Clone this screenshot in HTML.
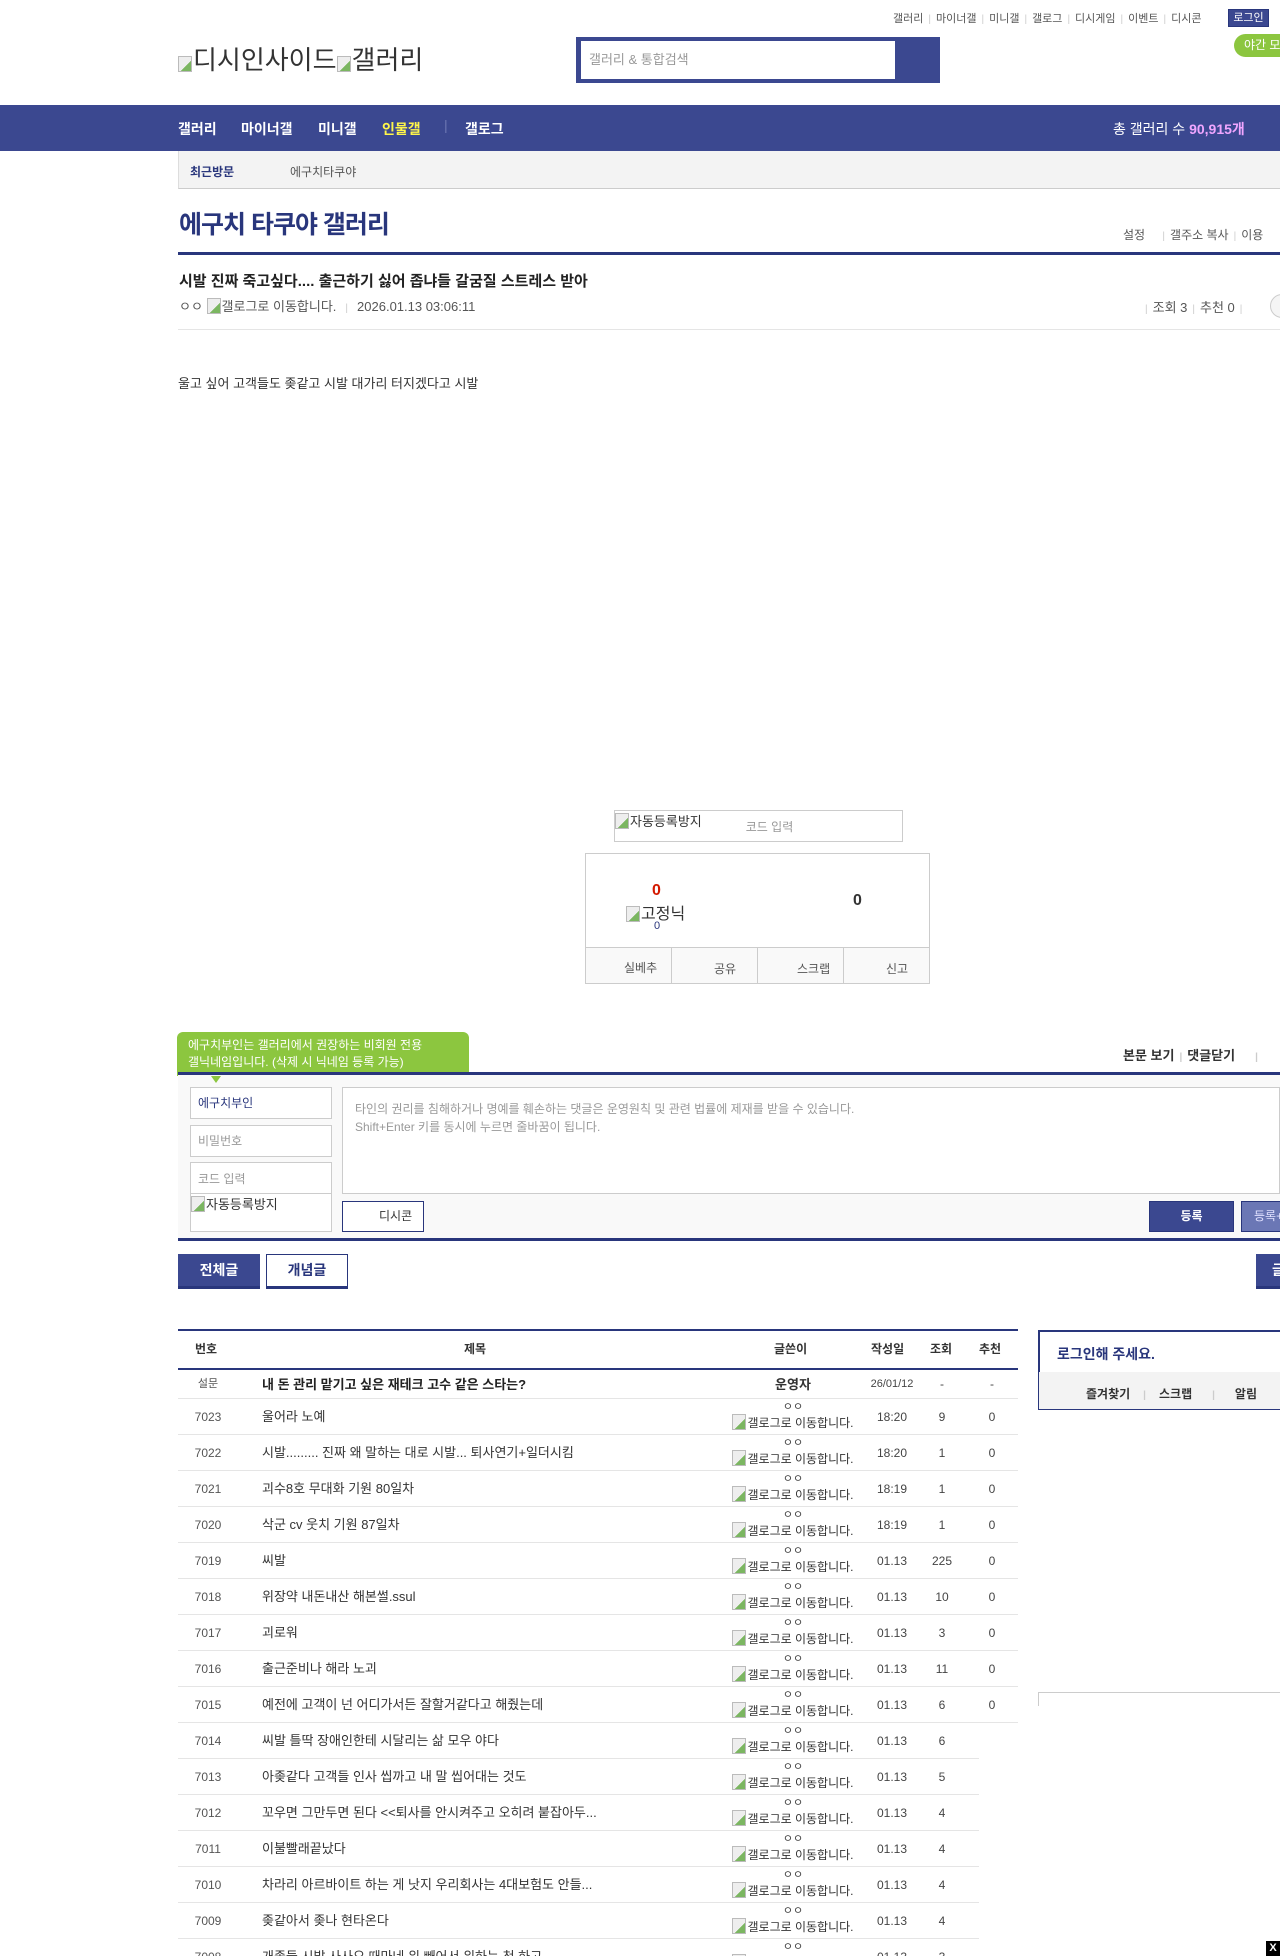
<!DOCTYPE html>
<html><head><meta charset="utf-8">
<style>
*{margin:0;padding:0;box-sizing:border-box}
html,body{width:1280px;height:1956px;overflow:hidden;background:#fff}
body{position:relative;font-family:"Liberation Sans","Noto Sans CJK KR",sans-serif;font-size:13px;color:#333}
.a{position:absolute;white-space:nowrap}
.bi{display:inline-block;width:14px;height:16px;border:1px solid #bbb;background:linear-gradient(135deg,#eee 60%,#7bb661 60%);vertical-align:-3px;margin-right:1px}
.top a{color:#555;font-size:11px;text-decoration:none}
.sep{color:#ccc;margin:0 5px;font-size:10px}
.nav span{position:absolute;top:14px;color:#fff;font-weight:bold;font-size:14px}
.row{position:absolute;left:178px;height:36px;border-bottom:1px solid #e5e5e5;font-size:12px}
.row div{position:absolute;top:0;height:36px;line-height:36px}
.n{left:0;width:60px;text-align:center;color:#555}
.t{left:84px;font-size:13px;color:#333}
.w{left:535px;width:160px;text-align:center;line-height:13px!important;font-size:12px}
.w i{display:block;font-style:normal;font-size:11px;margin-top:2px;color:#444}
.d{left:686px;width:56px;text-align:center;color:#444}
.v{left:738px;width:52px;text-align:center;color:#444}
.r{left:788px;width:52px;text-align:center;color:#444}
</style></head><body>

<div class="a top" style="left:893px;top:10px">
<a>갤러리</a><span class="sep">|</span><a>마이너갤</a><span class="sep">|</span><a>미니갤</a><span class="sep">|</span><a>갤로그</a><span class="sep">|</span><a>디시게임</a><span class="sep">|</span><a>이벤트</a><span class="sep">|</span><a>디시콘</a>
</div>
<div class="a" style="left:1228px;top:9px;width:41px;height:18px;background:#3b4890;border:1px solid #29367c;color:#fff;font-size:11px;text-align:center;line-height:16px">로그인</div>
<div class="a" style="left:1234px;top:34px;width:60px;height:23px;background:#8cc63f;border-radius:12px;color:#fff;font-size:12px;line-height:23px;padding-left:10px">야간 모드</div>

<div class="a" style="left:178px;top:40px;font-size:26px;color:#333"><span class="bi"></span>디시인사이드<span class="bi"></span>갤러리</div>

<div class="a" style="left:576px;top:37px;width:364px;height:46px;background:#3b4890"></div>
<div class="a" style="left:581px;top:41px;width:314px;height:38px;background:#fff;color:#999;font-size:13px;line-height:38px;padding-left:8px">갤러리 &amp; 통합검색</div>

<div class="a nav" style="left:0;top:105px;width:1280px;height:46px;background:#3b4890">
<span style="left:178px">갤러리</span>
<span style="left:241px">마이너갤</span>
<span style="left:318px">미니갤</span>
<span style="left:382px;color:#fff64a">인물갤</span>
<span style="left:444px;top:12px;color:#6c77b3;font-weight:normal">|</span>
<span style="left:465px">갤로그</span>
<span style="left:1113px;font-weight:normal">총 갤러리 수 <b style="color:#f0a6ff">90,915개</b></span>
</div>

<div class="a" style="left:178px;top:151px;width:1102px;height:38px;background:#f3f3f3;border-left:1px solid #ddd;border-bottom:1px solid #ccc"></div>
<div class="a" style="left:190px;top:163px;font-size:12px;font-weight:bold;color:#29367c">최근방문</div>
<div class="a" style="left:290px;top:163px;font-size:12px;color:#555">에구치타쿠야</div>

<div class="a" style="left:179px;top:205px;font-size:25px;font-weight:bold;color:#29367c;letter-spacing:-1px">에구치 타쿠야 갤러리</div>
<div class="a" style="left:1123px;top:226px;font-size:12px;color:#555">설정 <span class="sep" style="margin-left:14px">|</span>갤주소 복사<span class="sep">|</span>이용</div>
<div class="a" style="left:178px;top:252px;width:1102px;height:3px;background:#29367c"></div>

<div class="a" style="left:179px;top:270px;font-size:15px;font-weight:bold;color:#222">시발 진짜 죽고싶다.... 출근하기 싫어 좁냐들 갈굼질 스트레스 받아</div>
<div class="a" style="left:179px;top:296px;font-size:13px;color:#555">ㅇㅇ <span class="bi"></span>갤로그로 이동합니다.<span class="sep" style="margin:0 9px">|</span>2026.01.13 03:06:11</div>
<div class="a" style="left:1140px;top:297px;font-size:13px;color:#555"><span class="sep">|</span>조회 3<span class="sep">|</span>추천 0<span class="sep">|</span></div>
<div class="a" style="left:1270px;top:294px;width:24px;height:24px;border:1px solid #ccc;border-radius:12px;background:#f5f5f5"></div>
<div class="a" style="left:178px;top:329px;width:1102px;height:1px;background:#e5e5e5"></div>

<div class="a" style="left:178px;top:373px;font-size:13px;color:#333">울고 싶어 고객들도 좆같고 시발 대가리 터지겠다고 시발</div>

<div class="a" style="left:614px;top:810px;width:289px;height:32px;border:1px solid #ccc;font-size:13px"><span class="bi"></span>자동등록방지<span style="color:#999;font-size:12px;margin-left:44px;position:relative;top:5px">코드 입력</span></div>

<div class="a" style="left:585px;top:853px;width:345px;height:131px;border:1px solid #ccc"></div>
<div class="a" style="left:652px;top:882px;color:#d31900;font-weight:bold;font-size:16px">0</div>
<div class="a" style="left:626px;top:900px;font-size:16px;color:#333"><span class="bi"></span>고정닉</div>
<div class="a" style="left:654px;top:920px;color:#29367c;font-size:11px">0</div>
<div class="a" style="left:853px;top:892px;color:#333;font-weight:bold;font-size:16px">0</div>
<div class="a" style="left:585px;top:947px;width:345px;height:37px;background:#f9f9f9;border:1px solid #ccc"></div>
<div class="a" style="left:671px;top:947px;width:1px;height:37px;background:#ccc"></div>
<div class="a" style="left:757px;top:947px;width:1px;height:37px;background:#ccc"></div>
<div class="a" style="left:843px;top:947px;width:1px;height:37px;background:#ccc"></div>
<div class="a" style="left:624px;top:959px;font-size:12px;color:#555">실베추</div>
<div class="a" style="left:714px;top:960px;font-size:12px;color:#555">공유</div>
<div class="a" style="left:797px;top:960px;font-size:12px;color:#555">스크랩</div>
<div class="a" style="left:886px;top:960px;font-size:12px;color:#555">신고</div>

<div class="a" style="left:177px;top:1032px;width:292px;height:44px;background:#8cc63f;border-radius:6px 6px 0 0;color:#fff;font-size:12px;line-height:17px;padding:5px 11px">에구치부인는 갤러리에서 권장하는 비회원 전용<br>갤닉네임입니다. (삭제 시 닉네임 등록 가능)</div>
<div class="a" style="left:211px;top:1076px;width:0;height:0;border-left:5px solid transparent;border-right:5px solid transparent;border-top:7px solid #8cc63f;z-index:2"></div>
<div class="a" style="left:1123px;top:1045px;font-size:13px;font-weight:bold;color:#333">본문 보기<span class="sep">|</span>댓글닫기<span class="sep" style="margin-left:20px">|</span></div>
<div class="a" style="left:178px;top:1072px;width:1102px;height:3px;background:#29367c"></div>
<div class="a" style="left:178px;top:1075px;width:1102px;height:165px;background:#f9f9f9"></div>
<div class="a" style="left:190px;top:1087px;width:142px;height:32px;border:1px solid #ccc;background:#fff;color:#29367c;font-size:12px;line-height:30px;padding-left:7px">에구치부인</div>
<div class="a" style="left:190px;top:1125px;width:142px;height:32px;border:1px solid #ccc;background:#fff;color:#999;font-size:12px;line-height:30px;padding-left:7px">비밀번호</div>
<div class="a" style="left:190px;top:1162px;width:142px;height:70px;border:1px solid #ccc;background:#fff"></div>
<div class="a" style="left:190px;top:1193px;width:142px;height:1px;background:#ccc"></div>
<div class="a" style="left:198px;top:1170px;color:#999;font-size:12px">코드 입력</div>
<div class="a" style="left:191px;top:1194px;font-size:13px"><span class="bi"></span>자동등록방지</div>
<div class="a" style="left:342px;top:1087px;width:938px;height:107px;border:1px solid #ccc;background:#fff;color:#999;font-size:12px;line-height:18px;padding:12px 12px">타인의 권리를 침해하거나 명예를 훼손하는 댓글은 운영원칙 및 관련 법률에 제재를 받을 수 있습니다.<br>Shift+Enter 키를 동시에 누르면 줄바꿈이 됩니다.</div>
<div class="a" style="left:342px;top:1201px;width:82px;height:31px;border:1px solid #29367c;background:#fff;font-size:12px;line-height:29px;padding-left:36px;color:#333">디시콘</div>
<div class="a" style="left:1149px;top:1201px;width:85px;height:31px;background:#3b4890;border:1px solid #29367c;color:#fff;font-size:12px;font-weight:bold;text-align:center;line-height:29px">등록</div>
<div class="a" style="left:1241px;top:1201px;width:60px;height:31px;background:#6b77b5;border:1px solid #29367c;color:#e0e0ff;font-size:12px;line-height:29px;padding-left:12px">등록+추천</div>
<div class="a" style="left:178px;top:1238px;width:1102px;height:3px;background:#29367c"></div>

<div class="a" style="left:178px;top:1254px;width:82px;height:35px;background:#3b4890;border-bottom:3px solid #29367c;color:#fff;font-weight:bold;font-size:14px;text-align:center;line-height:33px">전체글</div>
<div class="a" style="left:266px;top:1254px;width:82px;height:35px;background:#fff;border:1px solid #29367c;border-bottom:3px solid #29367c;color:#29367c;font-weight:bold;font-size:14px;text-align:center;line-height:31px">개념글</div>
<div class="a" style="left:1256px;top:1254px;width:40px;height:35px;background:#3b4890;border-bottom:3px solid #29367c;color:#fff;font-weight:bold;font-size:14px;line-height:33px;padding-left:16px">글쓰기</div>

<div class="a" style="left:178px;top:1329px;width:840px;height:2px;background:#29367c"></div>
<div class="a" style="left:178px;top:1340px;width:840px;font-size:12px;font-weight:bold;color:#333;height:20px">
<span class="a" style="left:17px">번호</span><span class="a" style="left:286px">제목</span><span class="a" style="left:596px">글쓴이</span><span class="a" style="left:693px">작성일</span><span class="a" style="left:752px">조회</span><span class="a" style="left:801px">추천</span></div>
<div class="a" style="left:178px;top:1368px;width:840px;height:2px;background:#29367c"></div>

<div class="row" style="top:1370px;width:840px;height:29px"><div class="n" style="height:29px;line-height:29px;font-size:11px">설문</div><div class="t" style="height:29px;line-height:29px;font-weight:bold;color:#222">내 돈 관리 맡기고 싶은 재테크 고수 같은 스타는?</div><div class="w" style="height:29px;line-height:29px!important;font-weight:bold;font-size:13px">운영자</div><div class="d" style="height:29px;line-height:29px;font-size:11px">26/01/12</div><div class="v" style="height:29px;line-height:29px">-</div><div class="r" style="height:29px;line-height:29px">-</div></div>

<div class="row" style="top:1399px;width:840px"><div class="n">7023</div><div class="t">울어라 노예</div><div class="w"><i>ㅇㅇ</i><span class="bi"></span>갤로그로 이동합니다.</div><div class="d">18:20</div><div class="v">9</div><div class="r">0</div></div>
<div class="row" style="top:1435px;width:840px"><div class="n">7022</div><div class="t">시발......... 진짜 왜 말하는 대로 시발... 퇴사연기+일더시킴</div><div class="w"><i>ㅇㅇ</i><span class="bi"></span>갤로그로 이동합니다.</div><div class="d">18:20</div><div class="v">1</div><div class="r">0</div></div>
<div class="row" style="top:1471px;width:840px"><div class="n">7021</div><div class="t">괴수8호 무대화 기원 80일차</div><div class="w"><i>ㅇㅇ</i><span class="bi"></span>갤로그로 이동합니다.</div><div class="d">18:19</div><div class="v">1</div><div class="r">0</div></div>
<div class="row" style="top:1507px;width:840px"><div class="n">7020</div><div class="t">삭군 cv 웃치 기원 87일차</div><div class="w"><i>ㅇㅇ</i><span class="bi"></span>갤로그로 이동합니다.</div><div class="d">18:19</div><div class="v">1</div><div class="r">0</div></div>
<div class="row" style="top:1543px;width:840px"><div class="n">7019</div><div class="t">씨발</div><div class="w"><i>ㅇㅇ</i><span class="bi"></span>갤로그로 이동합니다.</div><div class="d">01.13</div><div class="v">225</div><div class="r">0</div></div>
<div class="row" style="top:1579px;width:840px"><div class="n">7018</div><div class="t">위장약 내돈내산 해본썰.ssul</div><div class="w"><i>ㅇㅇ</i><span class="bi"></span>갤로그로 이동합니다.</div><div class="d">01.13</div><div class="v">10</div><div class="r">0</div></div>
<div class="row" style="top:1615px;width:840px"><div class="n">7017</div><div class="t">괴로워</div><div class="w"><i>ㅇㅇ</i><span class="bi"></span>갤로그로 이동합니다.</div><div class="d">01.13</div><div class="v">3</div><div class="r">0</div></div>
<div class="row" style="top:1651px;width:840px"><div class="n">7016</div><div class="t">출근준비나 해라 노괴</div><div class="w"><i>ㅇㅇ</i><span class="bi"></span>갤로그로 이동합니다.</div><div class="d">01.13</div><div class="v">11</div><div class="r">0</div></div>
<div class="row" style="top:1687px;width:840px"><div class="n">7015</div><div class="t">예전에 고객이 넌 어디가서든 잘할거같다고 해줬는데</div><div class="w"><i>ㅇㅇ</i><span class="bi"></span>갤로그로 이동합니다.</div><div class="d">01.13</div><div class="v">6</div><div class="r">0</div></div>
<div class="row" style="top:1723px;width:801px"><div class="n">7014</div><div class="t">씨발 틀딱 장애인한테 시달리는 삶 모우 야다</div><div class="w"><i>ㅇㅇ</i><span class="bi"></span>갤로그로 이동합니다.</div><div class="d">01.13</div><div class="v">6</div></div>
<div class="row" style="top:1759px;width:801px"><div class="n">7013</div><div class="t">아좆같다 고객들 인사 씹까고 내 말 씹어대는 것도</div><div class="w"><i>ㅇㅇ</i><span class="bi"></span>갤로그로 이동합니다.</div><div class="d">01.13</div><div class="v">5</div></div>
<div class="row" style="top:1795px;width:801px"><div class="n">7012</div><div class="t">꼬우면 그만두면 된다 &lt;&lt;퇴사를 안시켜주고 오히려 붙잡아두...</div><div class="w"><i>ㅇㅇ</i><span class="bi"></span>갤로그로 이동합니다.</div><div class="d">01.13</div><div class="v">4</div></div>
<div class="row" style="top:1831px;width:801px"><div class="n">7011</div><div class="t">이불빨래끝났다</div><div class="w"><i>ㅇㅇ</i><span class="bi"></span>갤로그로 이동합니다.</div><div class="d">01.13</div><div class="v">4</div></div>
<div class="row" style="top:1867px;width:801px"><div class="n">7010</div><div class="t">차라리 아르바이트 하는 게 낫지 우리회사는 4대보험도 안들...</div><div class="w"><i>ㅇㅇ</i><span class="bi"></span>갤로그로 이동합니다.</div><div class="d">01.13</div><div class="v">4</div></div>
<div class="row" style="top:1903px;width:801px"><div class="n">7009</div><div class="t">좆같아서 좆나 현타온다</div><div class="w"><i>ㅇㅇ</i><span class="bi"></span>갤로그로 이동합니다.</div><div class="d">01.13</div><div class="v">4</div></div>
<div class="row" style="top:1939px;width:801px"><div class="n">7008</div><div class="t">개좆들 시발 사사오 때마네 위 빼어서 위하는 척 하고</div><div class="w"><i>ㅇㅇ</i><span class="bi"></span>갤로그로 이동합니다.</div><div class="d">01.13</div><div class="v">3</div></div>

<div class="a" style="left:1038px;top:1330px;width:250px;height:80px;border:2px solid #29367c;border-bottom:1px solid #29367c"></div>
<div class="a" style="left:1039px;top:1372px;width:241px;height:37px;background:#f3f3f3"></div>
<div class="a" style="left:1057px;top:1344px;font-size:14px;font-weight:bold;color:#29367c">로그인해 주세요.</div>
<div class="a" style="left:1086px;top:1385px;font-size:12px;font-weight:bold;color:#333">즐겨찾기<span class="sep" style="margin:0 13px">|</span>스크랩<span class="sep" style="margin:0 20px">|</span>알림</div>
<div class="a" style="left:1038px;top:1692px;width:242px;height:1px;background:#ccc"></div>
<div class="a" style="left:1038px;top:1692px;width:1px;height:14px;background:#ccc"></div>

<div class="a" style="left:1266px;top:1941px;width:14px;height:15px;background:#000;color:#fff;font-size:11px;font-weight:bold;text-align:center;line-height:15px">X</div>
</body></html>
